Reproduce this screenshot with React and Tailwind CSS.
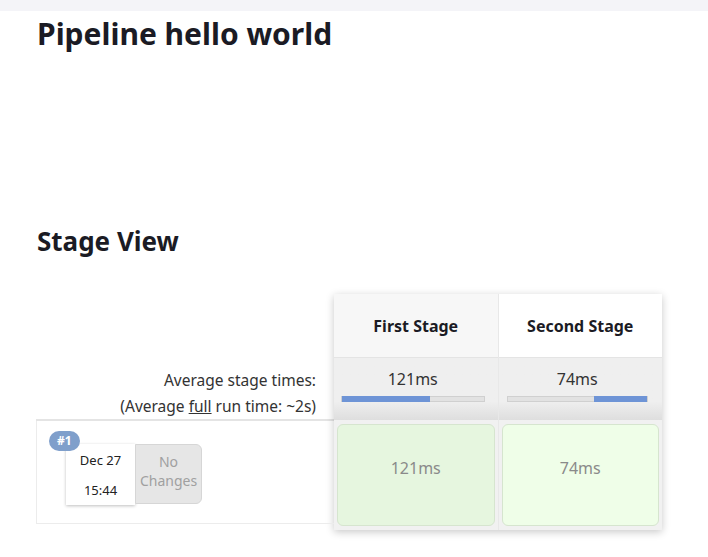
const stages = [
  { name: "First Stage", avg: "121ms", fillFrom: 0, fillTo: 62, headBg: "bg-[#f7f7f7]", cellBg: "bg-[#e6f6df]", pad: "pl-[7px] pr-[13px]" },
  { name: "Second Stage", avg: "74ms", fillFrom: 62, fillTo: 100, headBg: "bg-white", cellBg: "bg-[#effee8]", pad: "pl-[8px] pr-[14px]" },
];

function ProgressBar({ from, to }) {
  return (
    <div className="relative h-[6px] w-full bg-[#e2e2e2] border border-[#d0d0d0]">
      <div
        className="absolute top-[-1px] bottom-[-1px] bg-[#6e94d6]"
        style={{ left: `${from}%`, width: `${to - from}%` }}
      />
    </div>
  );
}

export default function App() {
  return (
    <div className="min-h-screen bg-white text-[#1b1b24] font-['Noto_Sans','Open_Sans',sans-serif]">
      <div className="h-[11px] bg-[#f4f4f8]" />
      <div className="pl-[37px]">
        <h1 className="text-[30px] font-bold leading-[46px]">Pipeline hello world</h1>
        <h2 className="text-[26px] font-bold leading-[36px] mt-[166px]">Stage View</h2>
      </div>

      <div className="flex pl-[36px] mt-[35px]">
        {/* left column */}
        <div className="w-[298px] flex flex-col pt-[63px]">
          <div className="h-[64px] flex flex-col items-end pt-[10px] pr-[18px] text-[15.5px] leading-[26px] text-[#333] border-b-2 border-[#e4e4e4]">
            <span>Average stage times:</span>
            <span>
              (Average <span className="underline">full</span> run time: ~2s)
            </span>
          </div>
          <div className="h-[103px] border-l border-b border-[#ececec] relative">
            <div className="absolute left-[12px] top-[10px] z-10 rounded-full bg-[#7f9fcb] text-white text-[12px] font-bold px-[8px] leading-[20px]">
              #1
            </div>
            <div className="flex mt-[23px] ml-[29px]">
              <div className="w-[69px] h-[61px] bg-white shadow-[0_1px_3px_rgba(0,0,0,0.25)] flex flex-col items-center justify-between pt-[7px] pb-[5px] text-[13px] text-[#222]">
                <span>Dec 27</span>
                <span>15:44</span>
              </div>
              <div className="w-[67px] h-[60px] bg-[#e6e6e6] border border-[#d6d6d6] rounded-r-[6px] flex flex-col items-center justify-center pb-[6px] text-[14px] leading-[19px] text-[#a0a0a0]">
                <span>No</span>
                <span>Changes</span>
              </div>
            </div>
          </div>
        </div>

        {/* stage panel */}
        <div className="w-[328px] h-[236px] shadow-[0_2px_8px_rgba(0,0,0,0.22)] bg-[#f1f1f1] flex">
          {stages.map((s, i) => (
            <div key={s.name} className={`flex-1 flex flex-col ${i === 0 ? "border-r border-[#e8e8e8]" : ""}`}>
              <div className={`h-[63px] ${s.headBg} flex items-center justify-center text-[16px] font-bold text-[#1b1b24]`}>
                {s.name}
              </div>
              <div className={`h-[63px] bg-gradient-to-b from-[#efefef] from-70% to-[#dedede] flex flex-col items-center ${s.pad} pt-[10px] border-t border-[#e4e4e4]`}>
                <span className="text-[16px] leading-[22px] text-[#333]">{s.avg}</span>
                <div className="w-full mt-[6px]">
                  <ProgressBar from={s.fillFrom} to={s.fillTo} />
                </div>
              </div>
              <div className="flex-1 p-[3px] pt-[4px] pb-[4px]">
                <div className={`h-full rounded-[6px] ${s.cellBg} border border-[#d6e5cf] flex items-center justify-center text-[16px] text-[#8a8a8a] pb-[14px]`}>
                  {s.avg}
                </div>
              </div>
            </div>
          ))}
        </div>
      </div>
    </div>
  );
}
